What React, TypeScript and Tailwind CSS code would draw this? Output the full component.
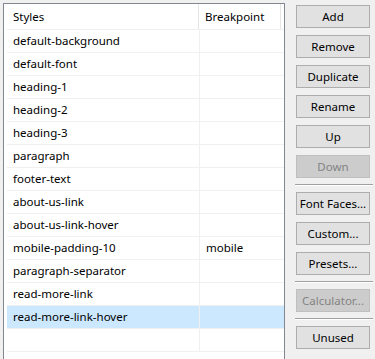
const rows = [
  { name: "default-background", bp: "" },
  { name: "default-font", bp: "" },
  { name: "heading-1", bp: "" },
  { name: "heading-2", bp: "" },
  { name: "heading-3", bp: "" },
  { name: "paragraph", bp: "" },
  { name: "footer-text", bp: "" },
  { name: "about-us-link", bp: "" },
  { name: "about-us-link-hover", bp: "" },
  { name: "mobile-padding-10", bp: "mobile" },
  { name: "paragraph-separator", bp: "" },
  { name: "read-more-link", bp: "" },
  { name: "read-more-link-hover", bp: "", selected: true },
  { name: "", bp: "" },
];

// button groups, split by etched separators
const groups = [
  [{ label: "Add" }, { label: "Remove" }, { label: "Duplicate" }, { label: "Rename" }, { label: "Up" }, { label: "Down", disabled: true }],
  [{ label: "Font Faces..." }, { label: "Custom..." }, { label: "Presets..." }],
  [{ label: "Calculator...", disabled: true }],
  [{ label: "Unused" }],
];

function Button({ label, disabled }: { label: string; disabled?: boolean }) {
  return (
    <div
      className={
        disabled
          ? "ml-[1px] w-[74px] h-[23px] flex items-center justify-center border border-[#bfbfbf] bg-[#cccccc] text-[#838383]"
          : "ml-[1px] w-[74px] h-[23px] flex items-center justify-center border border-[#adadad] bg-[#e1e1e1] text-black"
      }
    >
      {label}
    </div>
  );
}

export default function App() {
  return (
    <div
      className="w-[375px] h-[359px] overflow-hidden bg-[#f0f0f0] flex items-start text-[11.5px] leading-none"
      style={{ fontFamily: '"Noto Sans", "Open Sans", sans-serif' }}
    >
      {/* Styles list */}
      <div className="ml-[3px] mt-[3px] w-[282px] h-[380px] shrink-0 border border-[#828790] bg-white pl-[3px]">
        <div className="flex h-[26px] border-b border-[#f0f0f0]">
          <div className="w-[192px] border-r border-[#e5e5e5] pl-[6px] flex items-center">Styles</div>
          <div className="w-[82px] border-r border-[#e5e5e5] pl-[6px] flex items-center">Breakpoint</div>
        </div>
        {rows.map((row, i) => (
          <div
            key={i}
            className={
              row.selected
                ? "flex h-[23px] border-b border-[#f0f0f0] bg-[#cce8ff]"
                : "flex h-[23px] border-b border-[#f0f0f0]"
            }
          >
            <div className="w-[193px] border-r border-[#f0f0f0] pl-[6px] flex items-center">{row.name}</div>
            <div className="flex-1 pl-[6px] flex items-center">{row.bp}</div>
          </div>
        ))}
      </div>

      {/* Buttons */}
      <div className="ml-[10px] w-[78px] pt-[5px] flex flex-col">
        {groups.map((group, gi) => (
          <div key={gi} className="flex flex-col">
            {gi > 0 && <div className="mt-[6px] mb-[6px] h-[2px] border-t border-[#a0a0a0] border-b border-b-white" />}
            <div className="flex flex-col gap-[7px]">
              {group.map((b) => (
                <Button key={b.label} label={b.label} disabled={b.disabled} />
              ))}
            </div>
          </div>
        ))}
      </div>
    </div>
  );
}
